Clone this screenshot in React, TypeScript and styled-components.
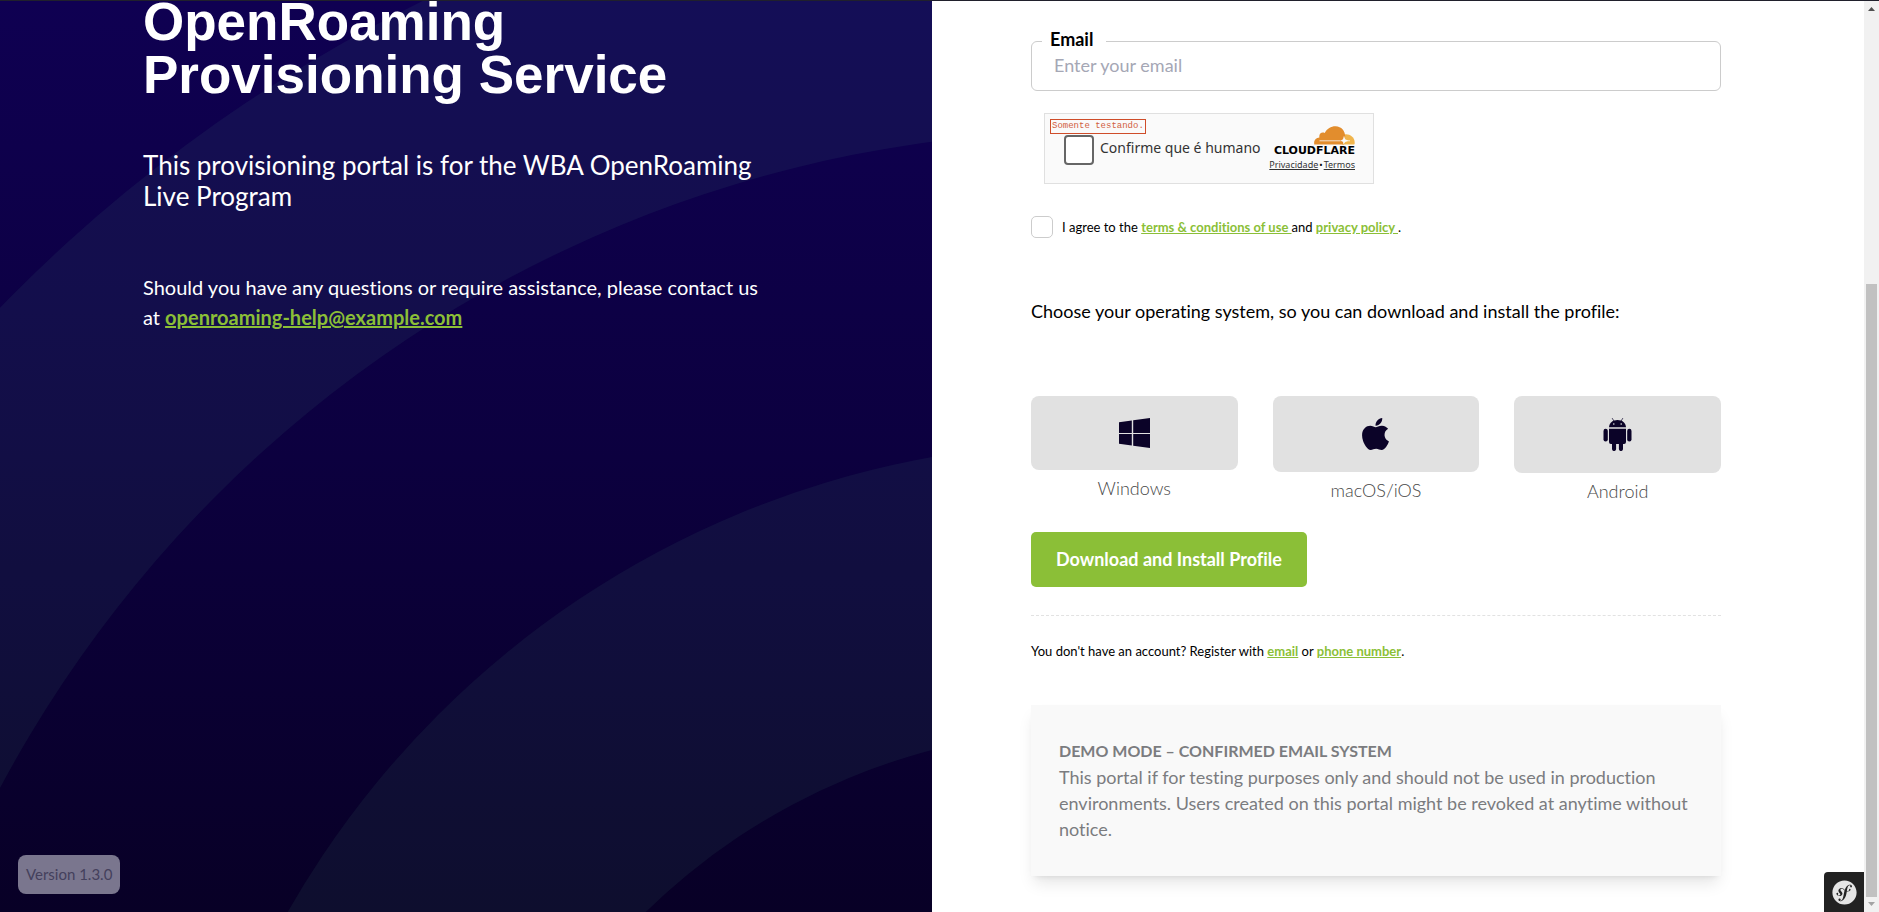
import React from "react";
import styled, { createGlobalStyle } from "styled-components";
import { FaSymfony } from "react-icons/fa";

const green = "#8bbf37";
const ink = "#0b0328";

const GlobalStyle = createGlobalStyle`
  *, *::before, *::after { box-sizing: border-box; }
  body {
    margin: 0;
    background: #fff;
    color: #000;
    font-family: Lato, "Open Sans", sans-serif;
    font-variant-ligatures: none;
  }
  h1, h2, p { margin: 0; }
  button, input { font: inherit; }
`;

const Page = styled.div`
  display: grid;
  grid-template-columns: 1fr 1fr 15px;
  min-height: 100vh;
  border-top: 1px solid #20202c;
`;

const IntroPanel = styled.section`
  position: relative;
  overflow: hidden;
  padding: 0 163px 0 143px;
  background: linear-gradient(#0f0052, #0c003f 50%, #080026);
  color: #fff;
`;

const Waves = styled.svg`
  position: absolute;
  inset: 0;
  width: 100%;
  height: 100%;
`;

const IntroContent = styled.div`
  position: relative;
  margin-top: -6px;
`;

const Title = styled.h1`
  font: 700 53px/53px "Liberation Sans", Arial, sans-serif;
`;

const Subtitle = styled.h2`
  margin-top: 49px;
  font-size: 26px;
  font-weight: 400;
  line-height: 31px;
`;

const Contact = styled.p`
  margin-top: 60px;
  font-size: 20px;
  line-height: 30px;
`;

const GreenLink = styled.a`
  color: ${green};
  font-weight: 700;
  text-decoration: underline;
`;

const Version = styled.div`
  position: absolute;
  left: 18px;
  bottom: 18px;
  padding: 8px;
  border-radius: 8px;
  background: #7a768e;
  color: #44405c;
  font-size: 15px;
  line-height: 23px;
`;

const FormPanel = styled.main`
  position: relative;
  padding: 40px 143px 36px 99px;
`;

const Field = styled.div`
  position: relative;
`;

const FieldLabel = styled.label`
  position: absolute;
  top: -13px;
  left: 11px;
  padding: 0 13px 0 8px;
  background: #fff;
  font-size: 18px;
  font-weight: 700;
  line-height: 22px;
`;

const TextInput = styled.input`
  display: block;
  width: 100%;
  height: 50px;
  padding: 0 22px 2px;
  border: 1px solid #ccc;
  border-radius: 6px;
  background: transparent;
  font-size: 18px;
  &::placeholder { color: #a5a7b5; opacity: 1; }
`;

const Captcha = styled.div`
  position: relative;
  display: flex;
  align-items: flex-start;
  justify-content: space-between;
  width: 330px;
  height: 71px;
  margin: 22px 0 0 13px;
  padding: 12px 18px 0 19px;
  border: 1px solid #e0e0e0;
  background: #fafafa;
  font-family: "Noto Sans", sans-serif;
`;

const TestNote = styled.span`
  position: absolute;
  top: 5px;
  left: 5px;
  padding: 0 1px;
  border: 1px solid #cf4d2a;
  color: #d1603f;
  font: 9px/13px "Liberation Mono", monospace;
`;

const CaptchaLabel = styled.label`
  display: flex;
  gap: 6px;
  margin-top: 9px;
  color: #333;
  font-size: 14px;
  line-height: 26px;
  white-space: nowrap;
`;

const CaptchaBox = styled.input`
  appearance: none;
  width: 30px;
  height: 30px;
  margin: 0;
  border: 2px solid #666;
  border-radius: 4px;
  background: #fff;
`;

const Brand = styled.div`
  display: flex;
  flex-direction: column;
  align-items: flex-end;
  color: #000;
`;

const BrandName = styled.span`
  font: 700 11px/12px "DejaVu Sans", sans-serif;
`;

const BrandLinks = styled.div`
  display: flex;
  gap: 1px;
  margin-top: 2px;
  font-size: 9px;
  line-height: 12px;
  a { color: #333; }
`;

const Agreement = styled.div`
  display: flex;
  align-items: center;
  gap: 9px;
  margin-top: 32px;
  font-size: 13px;
  line-height: 20px;
`;

const AgreeBox = styled.input`
  appearance: none;
  width: 22px;
  height: 22px;
  margin: 0;
  border: 1px solid #ccc;
  border-radius: 5px;
  background: #fff;
`;

const Prompt = styled.p`
  margin-top: 60px;
  font-size: 18px;
  line-height: 27px;
`;

const Systems = styled.div`
  display: grid;
  grid-template-columns: repeat(3, 1fr);
  align-items: start;
  gap: 35px;
  margin-top: 71px;
`;

const System = styled.button`
  display: flex;
  flex-direction: column;
  gap: 5px;
  padding: 0;
  border: 0;
  background: none;
  color: #484848;
  font-size: 18px;
  font-weight: 300;
  line-height: 27px;
`;

const SystemTile = styled.span`
  display: flex;
  justify-content: center;
  width: 100%;
  padding: 22px;
  border-radius: 8px;
  background: #e1e1e1;
  color: ${ink};
  svg { display: block; }
`;

const SystemName = styled.span`
  width: 100%;
  text-align: center;
`;

const Download = styled.button`
  margin-top: 27px;
  padding: 14px 25px;
  border: 0;
  border-radius: 5px;
  background: ${green};
  color: #fff;
  font-size: 18px;
  font-weight: 700;
  line-height: 27px;
`;

const Register = styled.p`
  margin-top: 28px;
  padding-top: 25px;
  border-top: 1px dashed #e2e2e2;
  font-size: 13px;
  line-height: 20px;
`;

const Notice = styled.section`
  margin-top: 44px;
  padding: 33px 28px 34px;
  background: #f9f9f9;
  box-shadow: 0 10px 15px -3px rgba(0, 0, 0, 0.1), 0 4px 6px -4px rgba(0, 0, 0, 0.1);
  color: #7b7c7f;
  font-size: 18px;
  line-height: 26px;
  h2 { font-size: 16px; }
`;

const DebugButton = styled.button`
  position: absolute;
  right: 0;
  bottom: 0;
  display: flex;
  align-items: center;
  justify-content: center;
  width: 40px;
  height: 40px;
  padding: 0;
  border: 0;
  border-radius: 4px 0 0 0;
  background: #222;
  color: #e5e5e5;
`;

const ScrollBar = styled.div`
  display: flex;
  flex-direction: column;
  padding: 0 2px;
  background: #f1f1f1;
`;

const ScrollArrow = styled.svg`
  flex: none;
  width: 11px;
  height: 15px;
`;

const ScrollGap = styled.div`
  flex: 268;
`;

const ScrollThumb = styled.div`
  flex: 613;
  background: #c1c1c1;
`;

const WindowsIcon = () => (
  <svg width="31" height="30" viewBox="0 0 31 30" fill="currentColor" aria-hidden="true">
    <path d="M0 4.3 12.8 2.5V15H0zM14.2 2.3 31 0V15H14.2zM0 16H12.8V27.5L0 25.7zM14.2 16H31V30L14.2 27.7z" />
  </svg>
);

const AppleIcon = () => (
  <svg width="27" height="32" viewBox="4 32 376 448" fill="currentColor" aria-hidden="true">
    <path d="M318.7 268.7c-.2-36.7 16.4-64.4 50-84.8-18.8-26.9-47.2-41.7-84.7-44.6-35.5-2.8-74.3 20.7-88.5 20.7-15 0-49.4-19.7-76.4-19.7C63.3 141.2 4 184.8 4 273.5q0 39.3 14.4 81.2c12.8 36.7 59 126.7 107.2 125.2 25.2-.6 43-17.9 75.8-17.9 31.8 0 48.3 17.9 76.4 17.9 48.6-.7 90.4-82.5 102.6-119.3-65.2-30.7-61.7-90-61.7-91.9zm-56.6-164.2c27.3-32.4 24.8-61.9 24-72.5-24.1 1.4-52 16.4-67.9 34.9-17.5 19.8-27.8 44.3-25.6 71.9 26.1 2 49.9-11.4 69.5-34.3z" />
  </svg>
);

const AndroidIcon = () => (
  <svg width="29" height="33" viewBox="0 0 29 33" fill="currentColor" aria-hidden="true">
    <path d="M6 9.3C6.2 4.8 9.8 2 14.5 2S22.8 4.8 23 9.3z" />
    <path d="M9.3.4 11 3.2M19.7.4 18 3.2" fill="none" stroke="currentColor" strokeWidth="0.7" strokeLinecap="round" />
    <circle cx="10.8" cy="6" r="0.8" fill="#e1e1e1" />
    <circle cx="18.2" cy="6" r="0.8" fill="#e1e1e1" />
    <path d="M6 10.8H23V24a1.9 1.9 0 0 1-1.9 1.9H20V31a2 2 0 0 1-4.1 0V25.9H13.1V31A2 2 0 0 1 9 31V25.9H7.9A1.9 1.9 0 0 1 6 24z" />
    <rect x="0.5" y="10.8" width="4.3" height="12.7" rx="2.1" />
    <rect x="24.2" y="10.8" width="4.3" height="12.7" rx="2.1" />
  </svg>
);

const CloudIcon = () => (
  <svg width="41" height="19" viewBox="0 0 41 19" aria-hidden="true">
    <path d="M31 8.4C35.5 7.8 40.5 11 40.7 16.5 40.7 17.8 40.5 18.5 40 18.5H28z" fill="#f0b54d" />
    <path d="M.3 18.5C-.6 14.5 2 11.7 5.4 11.5 4.7 8 7.5 5.5 10.7 7 13 2.5 17.3.2 21.6.3 27.5.5 31 5 31.2 10.3L30 18.500z" fill="#e28d2d" />
    <path d="M5.5 14.8H26.5M28 14.8H36" stroke="#fafafa" strokeWidth="0.8" />
    <path d="M30 9.7 31.2 13.2 34.4 14.7 31.2 16 29.5 18.5 29 15.8 26.5 14.7 29 13.2z" fill="#fafafa" />
  </svg>
);

const rings = [1527, 1241, 929, 643];

const ringPath = rings
  .map((r) => `M${1095 - r} 1372a${r} ${r} 0 1 0 ${2 * r} 0a${r} ${r} 0 1 0 ${-2 * r} 0z`)
  .join("");

const systems = [
  { name: "Windows", Icon: WindowsIcon },
  { name: "macOS/iOS", Icon: AppleIcon },
  { name: "Android", Icon: AndroidIcon },
];

export default function App() {
  return (
    <>
      <GlobalStyle />
      <Page>
        <IntroPanel>
          <Waves viewBox="0 1 932 911" preserveAspectRatio="xMidYMid slice" aria-hidden="true">
            <path d={ringPath} fillRule="evenodd" fill="rgba(100, 200, 150, 0.07)" />
          </Waves>
          <IntroContent>
            <Title>OpenRoaming<br />Provisioning Service</Title>
            <Subtitle>This provisioning portal is for the WBA OpenRoaming Live Program</Subtitle>
            <Contact>
              Should you have any questions or require assistance, please contact us at{" "}
              <GreenLink href="mailto:openroaming-help@example.com">openroaming-help@example.com</GreenLink>
            </Contact>
          </IntroContent>
          <Version>Version 1.3.0</Version>
        </IntroPanel>

        <FormPanel>
          <Field>
            <TextInput id="email" type="email" placeholder="Enter your email" />
            <FieldLabel htmlFor="email">Email</FieldLabel>
          </Field>

          <Captcha>
            <TestNote>Somente testando.</TestNote>
            <CaptchaLabel>
              <CaptchaBox type="checkbox" />
              Confirme que é humano
            </CaptchaLabel>
            <Brand>
              <CloudIcon />
              <BrandName>CLOUDFLARE</BrandName>
              <BrandLinks>
                <a href="#privacy">Privacidade</a>
                <span>•</span>
                <a href="#terms">Termos</a>
              </BrandLinks>
            </Brand>
          </Captcha>

          <Agreement>
            <AgreeBox id="agree" type="checkbox" />
            <label htmlFor="agree">
              I agree to the <GreenLink href="#terms">terms &amp; conditions of use </GreenLink>and{" "}
              <GreenLink href="#privacy">privacy policy </GreenLink>.
            </label>
          </Agreement>

          <Prompt>Choose your operating system, so you can download and install the profile:</Prompt>

          <Systems>
            {systems.map(({ name, Icon }) => (
              <System key={name} type="button">
                <SystemTile><Icon /></SystemTile>
                <SystemName>{name}</SystemName>
              </System>
            ))}
          </Systems>

          <Download type="button">Download and Install Profile</Download>

          <Register>
            You don't have an account? Register with <GreenLink href="#email">email</GreenLink> or{" "}
            <GreenLink href="#phone">phone number</GreenLink>.
          </Register>

          <Notice>
            <h2>DEMO MODE – CONFIRMED EMAIL SYSTEM</h2>
            <p>
              This portal if for testing purposes only and should not be used in production environments. Users
              created on this portal might be revoked at anytime without notice.
            </p>
          </Notice>

          <DebugButton type="button" aria-label="Symfony toolbar">
            <FaSymfony size={25} />
          </DebugButton>
        </FormPanel>

        <ScrollBar aria-hidden="true">
          <ScrollArrow viewBox="0 0 11 15"><path d="M2 10 5.5 6 9 10z" fill="#505050" /></ScrollArrow>
          <ScrollGap />
          <ScrollThumb />
          <ScrollArrow viewBox="0 0 11 15"><path d="M2 5 5.5 9 9 5z" fill="#a3a3a3" /></ScrollArrow>
        </ScrollBar>
      </Page>
    </>
  );
}
